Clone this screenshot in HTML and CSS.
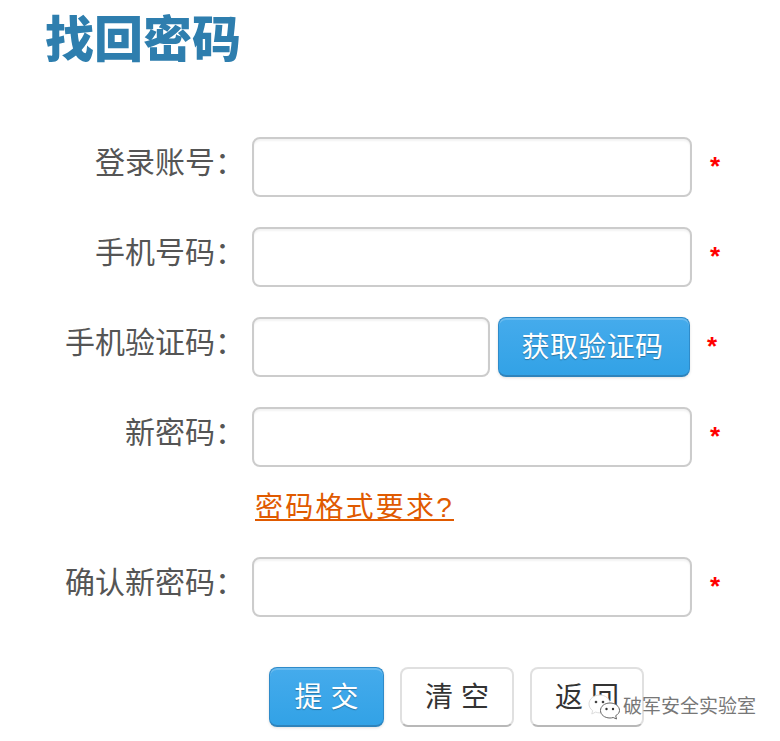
FILE: index.html
```html
<!DOCTYPE html>
<html lang="zh">
<head>
<meta charset="utf-8">
<title>找回密码</title>
<link rel="stylesheet" href="styles.css">
</head>
<body>
<h1 class="title">找回密码</h1>
<form class="form">
  <div class="row"><label class="label">登录账号：</label><input class="input" type="text"><span class="req">*</span></div>
  <div class="row"><label class="label">手机号码：</label><input class="input" type="text"><span class="req">*</span></div>
  <div class="row"><label class="label">手机验证码：</label><input class="input input-short" type="text"><button class="btn btn-blue btn-code" type="button">获取验证码</button><span class="req req-code">*</span></div>
  <div class="row row-pw"><label class="label">新密码：</label><input class="input" type="password"><span class="req">*</span></div>
  <div class="hint"><a class="hint-link" href="#">密码格式要求?</a></div>
  <div class="row"><label class="label">确认新密码：</label><input class="input" type="password"><span class="req">*</span></div>
  <div class="actions">
    <button class="btn btn-blue btn-submit" type="button">提 交</button>
    <button class="btn btn-white btn-act" type="button">清 空</button>
    <button class="btn btn-white btn-act" type="button">返 回</button>
  </div>
</form>
<div class="mark">
  <svg class="mark-icon" width="34" height="26" viewBox="0 0 34 26" fill="none">
    <path d="M12 1C6 1 1 4.800 1 10c0 2.800 1.400 5 3.600 6.600L3.800 20l3.800-1.900c1.400.5 2.900.8 4.400.8 5.500 0 10-3.800 10-8.900S17.500 1 12 1z" fill="#fff" stroke="#ddd"/>
    <path d="M22 9c-5.500 0-9.500 3.400-9.500 7.500S16.500 24 22 24c1.100 0 2.200-.2 3.200-.5L28.500 25l-.8-3.300c2.200-1.300 3.800-3 3.800-5.200C31.500 12.400 27.500 9 22 9z" fill="#fff" stroke="#666"/>
    <circle cx="8" cy="8" r="1.300" fill="#444"/>
    <circle cx="15" cy="8" r="1.300" fill="#444"/>
    <circle cx="18.500" cy="15" r="1.200" fill="#333"/>
    <circle cx="25" cy="15" r="1.200" fill="#333"/>
  </svg>
  <span class="mark-text">破军安全实验室</span>
</div>
</body>
</html>
```
FILE: styles.css
```css
* { box-sizing: border-box; }
html, body { margin: 0; padding: 0; }
body {
  width: 780px;
  height: 741px;
  overflow: hidden;
  background: #fff;
  font-family: "Liberation Sans", "Noto Sans CJK SC", sans-serif;
  position: relative;
}
.title {
  margin: 0;
  padding: 11px 0 0 45px;
  height: 137px;
  font-size: 49px;
  line-height: 58px;
  font-weight: 900;
  color: #2e7eae;
}
.form { display: flex; flex-direction: column; }
.row {
  display: flex;
  align-items: center;
  height: 60px;
  margin-bottom: 30px;
}
.row-pw { margin-bottom: 0; }
.label {
  width: 245px;
  margin-right: 7px;
  text-align: right;
  font-size: 30px;
  line-height: 52px;
  height: 60px;
  color: #555;
  white-space: nowrap;
}
.input {
  width: 440px;
  height: 60px;
  border: 2px solid #ccc;
  border-radius: 8px;
  background: #fff;
  box-shadow: inset 0 2px 2px rgba(0,0,0,.05);
  outline: none;
  padding: 0 10px;
}
.input-short { width: 238px; }
.req {
  margin: 0 0 6px 16px;
  width: 14px;
  color: #f00;
  font-size: 26px;
  font-weight: 700;
  line-height: 26px;
  height: 22px;
  text-align: center;
}
.req-code { margin-left: 15px; }
.btn {
  font-family: inherit;
  height: 60px;
  border-radius: 8px;
  cursor: pointer;
  padding: 0 0 4px;
  font-size: 28px;
}
.btn-blue {
  border: 1px solid #2f8bc9;
  border-bottom: 2px solid #2e83bb;
  background: linear-gradient(#45abec, #32a2e6);
  color: #fff;
  box-shadow: inset 0 2px 0 rgba(255,255,255,.2), 0 1px 3px rgba(0,0,0,.12);
  text-shadow: 0 1px 1px rgba(0,0,0,.3);
}
.btn-white {
  border: 2px solid #e0e0e0;
  border-bottom: 2px solid #b8b8b8;
  background: #fff;
  color: #333;
}
.btn-code { width: 192px; margin-left: 8px; padding-right: 3px; letter-spacing: .4px; }
.hint {
  height: 90px;
  padding: 23px 0 0 255px;
}
.hint-link {
  color: #e05a00;
  font-size: 28px;
  line-height: 36px;
  letter-spacing: 2.200px;
  text-decoration: underline;
  display: inline-block;
}
.actions {
  display: flex;
  gap: 16px;
  padding-left: 269px;
  margin-top: 20px;
}
.btn-submit { width: 115px; }
.btn-act { width: 114px; }
.mark {
  position: absolute;
  left: 588px;
  top: 694px;
  display: flex;
  align-items: center;
  gap: 1px;
}
.mark-icon { display: block; }
.mark-text {
  font-size: 19px;
  line-height: 26px;
  color: #777;
  text-shadow: 1px 1px 0 #fff;
}
```
